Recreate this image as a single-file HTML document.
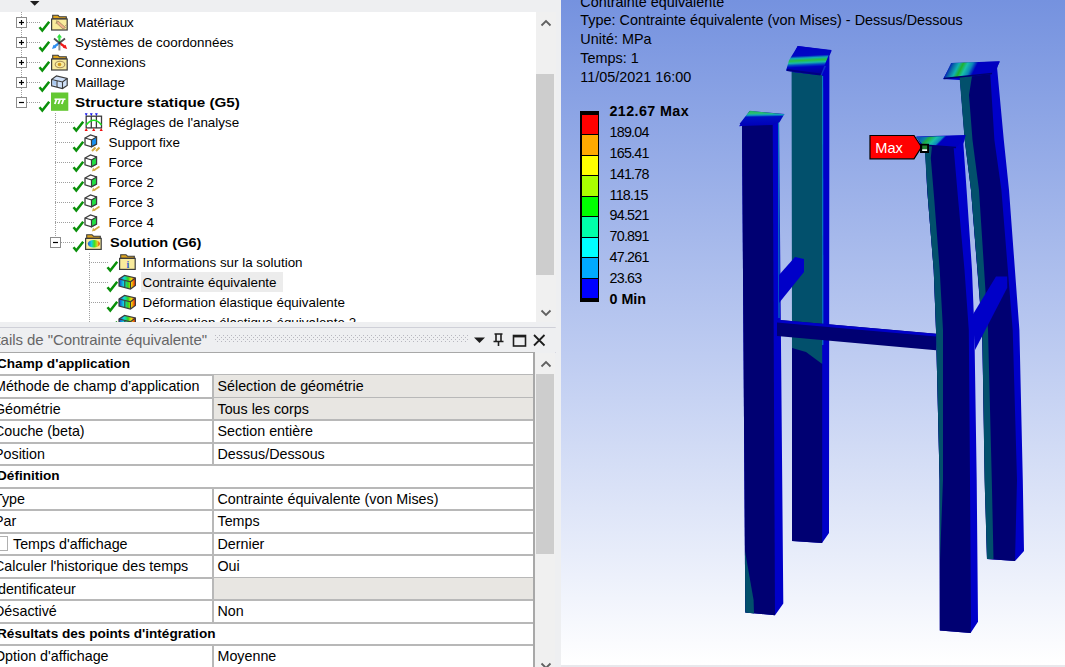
<!DOCTYPE html><html><head><meta charset="utf-8"><style>
*{margin:0;padding:0;box-sizing:border-box}
html,body{width:1065px;height:667px;overflow:hidden;background:#eeeff1;font-family:"Liberation Sans",sans-serif;color:#000}
.abs{position:absolute}
.tr{position:absolute;height:20px;line-height:20px;font-size:13.4px;white-space:nowrap;color:#000}
.b{font-weight:bold}
.dr{position:absolute;left:0;width:536px;font-size:14.3px;white-space:nowrap}
.vt{position:absolute;font-size:14.4px;white-space:nowrap;color:#000}
svg{position:absolute;overflow:visible}
</style></head><body>
<div class="abs" style="left:0;top:0;width:561px;height:12px;background:#eeeff1"></div>
<svg style="left:0;top:0" width="60" height="12"><path d="M30 1 L39.5 1 L34.7 5.8 Z" fill="#1e1e1e"/></svg>
<div class="abs" style="left:0;top:12px;width:536px;height:310px;background:#fff;overflow:hidden">
<div class="abs" style="left:21px;top:0px;width:1px;height:85px;background:repeating-linear-gradient(#a0a0a0 0 1px,transparent 1px 2px)"></div>
<div class="abs" style="left:55px;top:101px;width:1px;height:130px;background:repeating-linear-gradient(#a0a0a0 0 1px,transparent 1px 2px)"></div>
<div class="abs" style="left:89px;top:241px;width:1px;height:69px;background:repeating-linear-gradient(#a0a0a0 0 1px,transparent 1px 2px)"></div>
<svg style="left:16px;top:5px" width="11" height="11"><rect x="0.5" y="0.5" width="10" height="10" fill="#fff" stroke="#8c8c8c"/><path d="M3 5.5h5" stroke="#000" stroke-width="1.2"/><path d="M5.5 3v5" stroke="#000" stroke-width="1.2"/></svg>
<div class="abs" style="left:27px;top:10px;width:13px;height:1px;background:repeating-linear-gradient(90deg,#a0a0a0 0 1px,transparent 1px 2px)"></div>
<svg style="left:39px;top:9.399999999999999px" width="12" height="12"><path d="M0.5 6.2 L3.3 9.6 L10.2 0.8" fill="none" stroke="#0a900a" stroke-width="2.5"/></svg>
<svg style="left:50px;top:0px" width="20" height="20"><g transform="translate(0,0)"><path d="M2.7 6.8 V3.3 H8 L9.5 4.8 H16.3 V6.8Z" fill="#dca21c" stroke="#3c3c3c" stroke-width="1.1"/><rect x="1.6" y="7" width="15.6" height="11" fill="#f9eb9c" stroke="#3c3c3c" stroke-width="1.2"/><path d="M8 9 L15.5 15.5 L13 17 L6.5 11Z" fill="#f0b088" stroke="#a08860" stroke-width="0.8"/><path d="M7 8 L6 12 M15 14 L17 12.5" stroke="#a08860" stroke-width="0.8"/></g></svg>
<div class="tr" style="left:75px;top:1px;">Matériaux</div>
<svg style="left:16px;top:25px" width="11" height="11"><rect x="0.5" y="0.5" width="10" height="10" fill="#fff" stroke="#8c8c8c"/><path d="M3 5.5h5" stroke="#000" stroke-width="1.2"/><path d="M5.5 3v5" stroke="#000" stroke-width="1.2"/></svg>
<div class="abs" style="left:27px;top:30px;width:13px;height:1px;background:repeating-linear-gradient(90deg,#a0a0a0 0 1px,transparent 1px 2px)"></div>
<svg style="left:39px;top:29.4px" width="12" height="12"><path d="M0.5 6.2 L3.3 9.6 L10.2 0.8" fill="none" stroke="#0a900a" stroke-width="2.5"/></svg>
<svg style="left:50px;top:20px" width="20" height="20"><path d="M9.4 11 L9.4 4.5" stroke="#30e040" stroke-width="2.2"/><path d="M6.8 5.5 L9.4 2 L12 5.5Z" fill="#30e040"/><path d="M9.4 11 L4 6.5 M9.4 11 L15 6.5" stroke="#505050" stroke-width="1.8"/><path d="M9.4 11 L4.5 14.5" stroke="#3090f0" stroke-width="2.2"/><path d="M2 17 L3.5 12.8 L6.3 15.8Z" fill="#3090f0"/><path d="M9.4 11 L14.5 14.5" stroke="#f01818" stroke-width="2.2"/><path d="M17.2 17 L12.8 15.8 L15.5 12.8Z" fill="#f01818"/><path d="M9.4 11 V18.5" stroke="#8c8c8c" stroke-width="2"/><circle cx="9.4" cy="11" r="1.3" fill="#303030"/></svg>
<div class="tr" style="left:75px;top:21px;">Systèmes de coordonnées</div>
<svg style="left:16px;top:45px" width="11" height="11"><rect x="0.5" y="0.5" width="10" height="10" fill="#fff" stroke="#8c8c8c"/><path d="M3 5.5h5" stroke="#000" stroke-width="1.2"/><path d="M5.5 3v5" stroke="#000" stroke-width="1.2"/></svg>
<div class="abs" style="left:27px;top:50px;width:13px;height:1px;background:repeating-linear-gradient(90deg,#a0a0a0 0 1px,transparent 1px 2px)"></div>
<svg style="left:39px;top:49.4px" width="12" height="12"><path d="M0.5 6.2 L3.3 9.6 L10.2 0.8" fill="none" stroke="#0a900a" stroke-width="2.5"/></svg>
<svg style="left:50px;top:40px" width="20" height="20"><g transform="translate(0,0)"><path d="M2.7 6.8 V3.3 H8 L9.5 4.8 H16.3 V6.8Z" fill="#dca21c" stroke="#3c3c3c" stroke-width="1.1"/><rect x="1.6" y="7" width="15.6" height="11" fill="#f9eb9c" stroke="#3c3c3c" stroke-width="1.2"/><ellipse cx="10" cy="12.5" rx="4.8" ry="3.3" fill="none" stroke="#a89060" stroke-width="1.1"/><circle cx="9.5" cy="12.5" r="1.8" fill="#d09a20"/></g></svg>
<div class="tr" style="left:75px;top:41px;">Connexions</div>
<svg style="left:16px;top:65px" width="11" height="11"><rect x="0.5" y="0.5" width="10" height="10" fill="#fff" stroke="#8c8c8c"/><path d="M3 5.5h5" stroke="#000" stroke-width="1.2"/><path d="M5.5 3v5" stroke="#000" stroke-width="1.2"/></svg>
<div class="abs" style="left:27px;top:70px;width:13px;height:1px;background:repeating-linear-gradient(90deg,#a0a0a0 0 1px,transparent 1px 2px)"></div>
<svg style="left:39px;top:69.4px" width="12" height="12"><path d="M0.5 6.2 L3.3 9.6 L10.2 0.8" fill="none" stroke="#0a900a" stroke-width="2.5"/></svg>
<svg style="left:50px;top:60px" width="20" height="20"><path d="M1.6 7.5 L6.5 3.8 L17.2 6.5 V13.5 L12.5 16.5 L1.6 13.8Z" fill="#cfe0f8" stroke="#3c3c3c" stroke-width="1.2"/><path d="M1.6 7.5 L12.5 10 L17.2 6.5 M12.5 10 V16.5 M7 8.8 V15" fill="none" stroke="#3c3c3c" stroke-width="1.1"/><path d="M2.8 8.5 L6 9.2 V13 L2.8 12.5Z" fill="#a8c8f0"/></svg>
<div class="tr" style="left:75px;top:61px;">Maillage</div>
<svg style="left:16px;top:85px" width="11" height="11"><rect x="0.5" y="0.5" width="10" height="10" fill="#fff" stroke="#8c8c8c"/><path d="M3 5.5h5" stroke="#000" stroke-width="1.2"/></svg>
<div class="abs" style="left:27px;top:90px;width:13px;height:1px;background:repeating-linear-gradient(90deg,#a0a0a0 0 1px,transparent 1px 2px)"></div>
<svg style="left:39px;top:89.4px" width="12" height="12"><path d="M0.5 6.2 L3.3 9.6 L10.2 0.8" fill="none" stroke="#0a900a" stroke-width="2.5"/></svg>
<svg style="left:50px;top:80px" width="20" height="20"><rect x="1" y="0.5" width="17.3" height="18.3" fill="#64c832"/><path d="M4.5 7.2 H15.5" stroke="#fff" stroke-width="1.5"/><path d="M6.5 7.5 L4.8 12 M10 7.5 L8.3 12 M13.5 7.5 L11.8 12" stroke="#fff" stroke-width="1.8"/></svg>
<div class="tr b" style="left:75px;top:81px;transform:scaleX(1.1364);transform-origin:0 0;">Structure statique (G5)</div>
<div class="abs" style="left:55px;top:110px;width:19px;height:1px;background:repeating-linear-gradient(90deg,#a0a0a0 0 1px,transparent 1px 2px)"></div>
<svg style="left:73px;top:109.4px" width="12" height="12"><path d="M0.5 6.2 L3.3 9.6 L10.2 0.8" fill="none" stroke="#0a900a" stroke-width="2.5"/></svg>
<svg style="left:84px;top:100px" width="20" height="20"><path d="M0.8 1.2 H3.6 L2.2 4.2Z M5.9 1.2 H8.7 L7.3 4.2Z M11 1.2 H13.8 L12.4 4.2Z" fill="#1818f0"/><rect x="2.2" y="4.2" width="15.3" height="11.7" fill="#fff" stroke="#3c3c3c" stroke-width="1.3"/><path d="M7.3 4.2 V15.9 M12.4 4.2 V15.9" stroke="#3c3c3c" stroke-width="1.3"/><path d="M2.2 13 Q9.8 3.5 17.5 13" fill="none" stroke="#20e020" stroke-width="1.6"/><path d="M0.6 18.9 L2.2 15.9 L3.8 18.9Z M8.1 18.9 L9.7 15.9 L11.3 18.9Z M15.6 18.9 L17.2 15.9 L18.8 18.9Z" fill="#f01010"/></svg>
<div class="tr" style="left:108.5px;top:101px;">Réglages de l'analyse</div>
<div class="abs" style="left:55px;top:130px;width:19px;height:1px;background:repeating-linear-gradient(90deg,#a0a0a0 0 1px,transparent 1px 2px)"></div>
<svg style="left:73px;top:129.4px" width="12" height="12"><path d="M0.5 6.2 L3.3 9.6 L10.2 0.8" fill="none" stroke="#0a900a" stroke-width="2.5"/></svg>
<svg style="left:84px;top:120px" width="20" height="20"><path d="M1 6 L6.5 3 L12.5 5 V12 L7.5 14.8 L1 12.8Z" fill="#fff" stroke="#3c3c3c" stroke-width="1.3"/><path d="M7.5 8 L12.5 5 V12 L7.5 14.8Z" fill="#1890f0" stroke="#3c3c3c" stroke-width="1.1"/><path d="M1 6 L7.5 8 V14.8" fill="none" stroke="#3c3c3c" stroke-width="1.1"/><path d="M8 19 L11.5 15.5 M12 19 L15.5 15.5" stroke="#d4aa40" stroke-width="2"/></svg>
<div class="tr" style="left:108.5px;top:121px;">Support fixe</div>
<div class="abs" style="left:55px;top:150px;width:19px;height:1px;background:repeating-linear-gradient(90deg,#a0a0a0 0 1px,transparent 1px 2px)"></div>
<svg style="left:73px;top:149.4px" width="12" height="12"><path d="M0.5 6.2 L3.3 9.6 L10.2 0.8" fill="none" stroke="#0a900a" stroke-width="2.5"/></svg>
<svg style="left:84px;top:140px" width="20" height="20"><path d="M1 6 L6.5 3 L12.5 5 V12 L7.5 14.8 L1 12.8Z" fill="#fff" stroke="#3c3c3c" stroke-width="1.3"/><path d="M7.5 8 L12.5 5 V12 L7.5 14.8Z" fill="#20e040" stroke="#3c3c3c" stroke-width="1.1"/><path d="M1 6 L7.5 8 V14.8" fill="none" stroke="#3c3c3c" stroke-width="1.1"/><path d="M9.5 18.5 L15.5 14.5" stroke="#d4aa40" stroke-width="1.6"/><path d="M8 19.5 L9 15.8 L11.5 18.3Z" fill="#d4aa40"/></svg>
<div class="tr" style="left:108.5px;top:141px;">Force</div>
<div class="abs" style="left:55px;top:170px;width:19px;height:1px;background:repeating-linear-gradient(90deg,#a0a0a0 0 1px,transparent 1px 2px)"></div>
<svg style="left:73px;top:169.4px" width="12" height="12"><path d="M0.5 6.2 L3.3 9.6 L10.2 0.8" fill="none" stroke="#0a900a" stroke-width="2.5"/></svg>
<svg style="left:84px;top:160px" width="20" height="20"><path d="M1 6 L6.5 3 L12.5 5 V12 L7.5 14.8 L1 12.8Z" fill="#fff" stroke="#3c3c3c" stroke-width="1.3"/><path d="M7.5 8 L12.5 5 V12 L7.5 14.8Z" fill="#20e040" stroke="#3c3c3c" stroke-width="1.1"/><path d="M1 6 L7.5 8 V14.8" fill="none" stroke="#3c3c3c" stroke-width="1.1"/><path d="M9.5 18.5 L15.5 14.5" stroke="#d4aa40" stroke-width="1.6"/><path d="M8 19.5 L9 15.8 L11.5 18.3Z" fill="#d4aa40"/></svg>
<div class="tr" style="left:108.5px;top:161px;">Force 2</div>
<div class="abs" style="left:55px;top:190px;width:19px;height:1px;background:repeating-linear-gradient(90deg,#a0a0a0 0 1px,transparent 1px 2px)"></div>
<svg style="left:73px;top:189.4px" width="12" height="12"><path d="M0.5 6.2 L3.3 9.6 L10.2 0.8" fill="none" stroke="#0a900a" stroke-width="2.5"/></svg>
<svg style="left:84px;top:180px" width="20" height="20"><path d="M1 6 L6.5 3 L12.5 5 V12 L7.5 14.8 L1 12.8Z" fill="#fff" stroke="#3c3c3c" stroke-width="1.3"/><path d="M7.5 8 L12.5 5 V12 L7.5 14.8Z" fill="#20e040" stroke="#3c3c3c" stroke-width="1.1"/><path d="M1 6 L7.5 8 V14.8" fill="none" stroke="#3c3c3c" stroke-width="1.1"/><path d="M9.5 18.5 L15.5 14.5" stroke="#d4aa40" stroke-width="1.6"/><path d="M8 19.5 L9 15.8 L11.5 18.3Z" fill="#d4aa40"/></svg>
<div class="tr" style="left:108.5px;top:181px;">Force 3</div>
<div class="abs" style="left:55px;top:210px;width:19px;height:1px;background:repeating-linear-gradient(90deg,#a0a0a0 0 1px,transparent 1px 2px)"></div>
<svg style="left:73px;top:209.4px" width="12" height="12"><path d="M0.5 6.2 L3.3 9.6 L10.2 0.8" fill="none" stroke="#0a900a" stroke-width="2.5"/></svg>
<svg style="left:84px;top:200px" width="20" height="20"><path d="M1 6 L6.5 3 L12.5 5 V12 L7.5 14.8 L1 12.8Z" fill="#fff" stroke="#3c3c3c" stroke-width="1.3"/><path d="M7.5 8 L12.5 5 V12 L7.5 14.8Z" fill="#20e040" stroke="#3c3c3c" stroke-width="1.1"/><path d="M1 6 L7.5 8 V14.8" fill="none" stroke="#3c3c3c" stroke-width="1.1"/><path d="M9.5 18.5 L15.5 14.5" stroke="#d4aa40" stroke-width="1.6"/><path d="M8 19.5 L9 15.8 L11.5 18.3Z" fill="#d4aa40"/></svg>
<div class="tr" style="left:108.5px;top:201px;">Force 4</div>
<svg style="left:50px;top:225px" width="11" height="11"><rect x="0.5" y="0.5" width="10" height="10" fill="#fff" stroke="#8c8c8c"/><path d="M3 5.5h5" stroke="#000" stroke-width="1.2"/></svg>
<div class="abs" style="left:61px;top:230px;width:13px;height:1px;background:repeating-linear-gradient(90deg,#a0a0a0 0 1px,transparent 1px 2px)"></div>
<svg style="left:73px;top:229.4px" width="12" height="12"><path d="M0.5 6.2 L3.3 9.6 L10.2 0.8" fill="none" stroke="#0a900a" stroke-width="2.5"/></svg>
<svg style="left:84px;top:220px" width="20" height="20"><g transform="translate(0,-0.6)"><path d="M2.7 6.8 V3.3 H8 L9.5 4.8 H16.3 V6.8Z" fill="#dca21c" stroke="#3c3c3c" stroke-width="1.1"/><rect x="1.6" y="7" width="15.6" height="11" fill="#f9eb9c" stroke="#3c3c3c" stroke-width="1.2"/><defs><linearGradient id="rb" x1="0" x2="1"><stop offset="0" stop-color="#2050d0"/><stop offset="0.3" stop-color="#10d0e0"/><stop offset="0.55" stop-color="#40e020"/><stop offset="0.8" stop-color="#e0d020"/><stop offset="1" stop-color="#f02010"/></linearGradient></defs><ellipse cx="9.8" cy="12.3" rx="6" ry="3.8" fill="url(#rb)"/></g></svg>
<div class="tr b" style="left:109.5px;top:221px;transform:scaleX(1.0879);transform-origin:0 0;">Solution (G6)</div>
<div class="abs" style="left:89px;top:250px;width:19px;height:1px;background:repeating-linear-gradient(90deg,#a0a0a0 0 1px,transparent 1px 2px)"></div>
<svg style="left:107px;top:249.39999999999998px" width="12" height="12"><path d="M0.5 6.2 L3.3 9.6 L10.2 0.8" fill="none" stroke="#0a900a" stroke-width="2.5"/></svg>
<svg style="left:118px;top:240px" width="20" height="20"><g transform="translate(0,-0.6)"><path d="M2.7 6.8 V3.3 H8 L9.5 4.8 H16.3 V6.8Z" fill="#dca21c" stroke="#3c3c3c" stroke-width="1.1"/><rect x="1.6" y="7" width="15.6" height="11" fill="#f9eb9c" stroke="#3c3c3c" stroke-width="1.2"/><text x="9.8" y="17" font-size="10" fill="#3060d0" text-anchor="middle" font-family="Liberation Serif" font-weight="bold">i</text></g></svg>
<div class="tr" style="left:142.5px;top:241px;">Informations sur la solution</div>
<div class="abs" style="left:89px;top:270px;width:19px;height:1px;background:repeating-linear-gradient(90deg,#a0a0a0 0 1px,transparent 1px 2px)"></div>
<svg style="left:107px;top:269.4px" width="12" height="12"><path d="M0.5 6.2 L3.3 9.6 L10.2 0.8" fill="none" stroke="#0a900a" stroke-width="2.5"/></svg>
<svg style="left:118px;top:260px" width="20" height="20"><defs><linearGradient id="rg" x1="0" x2="1"><stop offset="0" stop-color="#1838d0"/><stop offset="0.3" stop-color="#10e0e0"/><stop offset="0.55" stop-color="#30d020"/><stop offset="0.75" stop-color="#f0e010"/><stop offset="1" stop-color="#f01808"/></linearGradient></defs><path d="M1 7 L6.5 3.5 L17.4 6 V13.5 L12.5 17 L1 14Z" fill="url(#rg)" stroke="#3c3c3c" stroke-width="1.2"/><path d="M1 7 L12.5 9.8 L17.4 6 M12.5 9.8 V17 M6.8 8.4 V15.5" fill="none" stroke="#3c3c3c" stroke-width="1.1"/></svg>
<div class="abs" style="left:141px;top:260px;width:142px;height:20px;background:#ececec"></div>
<div class="tr" style="left:142.5px;top:261px;">Contrainte équivalente</div>
<div class="abs" style="left:89px;top:290px;width:19px;height:1px;background:repeating-linear-gradient(90deg,#a0a0a0 0 1px,transparent 1px 2px)"></div>
<svg style="left:107px;top:289.4px" width="12" height="12"><path d="M0.5 6.2 L3.3 9.6 L10.2 0.8" fill="none" stroke="#0a900a" stroke-width="2.5"/></svg>
<svg style="left:118px;top:280px" width="20" height="20"><defs><linearGradient id="rg" x1="0" x2="1"><stop offset="0" stop-color="#1838d0"/><stop offset="0.3" stop-color="#10e0e0"/><stop offset="0.55" stop-color="#30d020"/><stop offset="0.75" stop-color="#f0e010"/><stop offset="1" stop-color="#f01808"/></linearGradient></defs><path d="M1 7 L6.5 3.5 L17.4 6 V13.5 L12.5 17 L1 14Z" fill="url(#rg)" stroke="#3c3c3c" stroke-width="1.2"/><path d="M1 7 L12.5 9.8 L17.4 6 M12.5 9.8 V17 M6.8 8.4 V15.5" fill="none" stroke="#3c3c3c" stroke-width="1.1"/></svg>
<div class="tr" style="left:142.5px;top:281px;">Déformation élastique équivalente</div>
<div class="abs" style="left:89px;top:310px;width:19px;height:1px;background:repeating-linear-gradient(90deg,#a0a0a0 0 1px,transparent 1px 2px)"></div>
<svg style="left:107px;top:309.4px" width="12" height="12"><path d="M0.5 6.2 L3.3 9.6 L10.2 0.8" fill="none" stroke="#0a900a" stroke-width="2.5"/></svg>
<svg style="left:118px;top:300px" width="20" height="20"><defs><linearGradient id="rg" x1="0" x2="1"><stop offset="0" stop-color="#1838d0"/><stop offset="0.3" stop-color="#10e0e0"/><stop offset="0.55" stop-color="#30d020"/><stop offset="0.75" stop-color="#f0e010"/><stop offset="1" stop-color="#f01808"/></linearGradient></defs><path d="M1 7 L6.5 3.5 L17.4 6 V13.5 L12.5 17 L1 14Z" fill="url(#rg)" stroke="#3c3c3c" stroke-width="1.2"/><path d="M1 7 L12.5 9.8 L17.4 6 M12.5 9.8 V17 M6.8 8.4 V15.5" fill="none" stroke="#3c3c3c" stroke-width="1.1"/></svg>
<div class="tr" style="left:142.5px;top:301px;">Déformation élastique équivalente 2</div>
</div>
<div class="abs" style="left:536px;top:12px;width:20px;height:310px;background:#f0f0f0"></div>
<div class="abs" style="left:536px;top:74px;width:18px;height:201px;background:#cdcdcd"></div>
<svg style="left:540px;top:19px" width="12" height="8"><path d="M1.5 6.5 L6 2 L10.5 6.5" fill="none" stroke="#606060" stroke-width="1.8"/></svg>
<svg style="left:540px;top:309px" width="12" height="8"><path d="M1.5 1.5 L6 6 L10.5 1.5" fill="none" stroke="#606060" stroke-width="1.8"/></svg>
<div class="abs" style="left:0;top:327px;width:556px;height:1px;background:#cfd0d8"></div>
<div class="abs" style="left:555px;top:327px;width:1px;height:26px;background:#d8d8e0"></div>
<div class="abs" style="left:0;top:328px;width:556px;height:24px;background:#eeeff1"></div>
<div class="abs" style="left:-3.5px;top:330.5px;font-size:15px;letter-spacing:-0.06px;color:#666;white-space:nowrap">tails de "Contrainte équivalente"</div>
<svg style="left:215px;top:335px" width="253" height="8"><defs><pattern id="dp" width="4" height="4" patternUnits="userSpaceOnUse"><rect x="0" y="0" width="1" height="1" fill="#b8b8c0"/><rect x="2" y="2" width="1" height="1" fill="#b8b8c0"/></pattern></defs><rect width="253" height="8" fill="url(#dp)"/></svg>
<svg style="left:474px;top:333px" width="80" height="14"><path d="M0 4.5 H11 L5.5 10Z" fill="#1e1e1e"/><path d="M20.5 1 H28.5 M22 1 V8.5 H27 V1 M19.5 8.5 H29.5 M24.5 8.5 V13" stroke="#1e1e1e" stroke-width="1.6" fill="none"/><rect x="39.5" y="2.5" width="12" height="10.5" fill="none" stroke="#1e1e1e" stroke-width="1.6"/><path d="M39.5 3.3 H51.5" stroke="#1e1e1e" stroke-width="2.2"/><path d="M60 2 L70.5 12.5 M70.5 2 L60 12.5" stroke="#1e1e1e" stroke-width="1.8"/></svg>
<div class="abs" style="left:0;top:352px;width:533px;height:315px;background:#fff;overflow:hidden">
<div class="dr" style="top:0.5px;height:22.5px;line-height:22.5px;left:-3px;font-weight:bold;font-size:13.6px">Champ d'application</div>
<div class="abs" style="left:0;top:22.0px;width:536px;height:2px;background:#b8b8b8"></div>
<div class="abs" style="left:214px;top:23.0px;width:323px;height:22.5px;background:#e8e6e2"></div>
<div class="abs" style="left:212px;top:23.0px;width:2px;height:22.5px;background:#b8b8b8"></div>
<div class="dr" style="top:23.0px;height:22.5px;line-height:22.5px;left:-6px">Méthode de champ d'application</div>
<div class="dr" style="top:23.0px;height:22.5px;line-height:22.5px;left:217.5px">Sélection de géométrie</div>
<div class="abs" style="left:0;top:44.5px;width:536px;height:2px;background:#b8b8b8"></div>
<div class="abs" style="left:214px;top:45.5px;width:323px;height:22.5px;background:#e8e6e2"></div>
<div class="abs" style="left:212px;top:45.5px;width:2px;height:22.5px;background:#b8b8b8"></div>
<div class="dr" style="top:45.5px;height:22.5px;line-height:22.5px;left:-6px">Géométrie</div>
<div class="dr" style="top:45.5px;height:22.5px;line-height:22.5px;left:217.5px">Tous les corps</div>
<div class="abs" style="left:0;top:67.0px;width:536px;height:2px;background:#b8b8b8"></div>
<div class="abs" style="left:212px;top:68.0px;width:2px;height:22.5px;background:#b8b8b8"></div>
<div class="dr" style="top:68.0px;height:22.5px;line-height:22.5px;left:-6px">Couche (beta)</div>
<div class="dr" style="top:68.0px;height:22.5px;line-height:22.5px;left:217.5px">Section entière</div>
<div class="abs" style="left:0;top:89.5px;width:536px;height:2px;background:#b8b8b8"></div>
<div class="abs" style="left:212px;top:90.5px;width:2px;height:22.5px;background:#b8b8b8"></div>
<div class="dr" style="top:90.5px;height:22.5px;line-height:22.5px;left:-6px">Position</div>
<div class="dr" style="top:90.5px;height:22.5px;line-height:22.5px;left:217.5px">Dessus/Dessous</div>
<div class="abs" style="left:0;top:112.0px;width:536px;height:2px;background:#b8b8b8"></div>
<div class="dr" style="top:113.0px;height:22.5px;line-height:22.5px;left:-3px;font-weight:bold;font-size:13.6px">Définition</div>
<div class="abs" style="left:0;top:134.5px;width:536px;height:2px;background:#b8b8b8"></div>
<div class="abs" style="left:212px;top:135.5px;width:2px;height:22.5px;background:#b8b8b8"></div>
<div class="dr" style="top:135.5px;height:22.5px;line-height:22.5px;left:-6px">Type</div>
<div class="dr" style="top:135.5px;height:22.5px;line-height:22.5px;left:217.5px">Contrainte équivalente (von Mises)</div>
<div class="abs" style="left:0;top:157.0px;width:536px;height:2px;background:#b8b8b8"></div>
<div class="abs" style="left:212px;top:158.0px;width:2px;height:22.5px;background:#b8b8b8"></div>
<div class="dr" style="top:158.0px;height:22.5px;line-height:22.5px;left:-6px">Par</div>
<div class="dr" style="top:158.0px;height:22.5px;line-height:22.5px;left:217.5px">Temps</div>
<div class="abs" style="left:0;top:179.5px;width:536px;height:2px;background:#b8b8b8"></div>
<div class="abs" style="left:212px;top:180.5px;width:2px;height:22.5px;background:#b8b8b8"></div>
<div class="abs" style="left:0px;top:184.2px;width:7.5px;height:14.5px;border:1px solid #b0b0b0;border-left:none;background:#fff"></div>
<div class="dr" style="top:180.5px;height:22.5px;line-height:22.5px;left:13px">Temps d'affichage</div>
<div class="dr" style="top:180.5px;height:22.5px;line-height:22.5px;left:217.5px">Dernier</div>
<div class="abs" style="left:0;top:202.0px;width:536px;height:2px;background:#b8b8b8"></div>
<div class="abs" style="left:212px;top:203.0px;width:2px;height:22.5px;background:#b8b8b8"></div>
<div class="dr" style="top:203.0px;height:22.5px;line-height:22.5px;left:-6px">Calculer l'historique des temps</div>
<div class="dr" style="top:203.0px;height:22.5px;line-height:22.5px;left:217.5px">Oui</div>
<div class="abs" style="left:0;top:224.5px;width:536px;height:2px;background:#b8b8b8"></div>
<div class="abs" style="left:214px;top:225.5px;width:323px;height:22.5px;background:#e8e6e2"></div>
<div class="abs" style="left:212px;top:225.5px;width:2px;height:22.5px;background:#b8b8b8"></div>
<div class="dr" style="top:225.5px;height:22.5px;line-height:22.5px;left:-6px">Identificateur</div>
<div class="dr" style="top:225.5px;height:22.5px;line-height:22.5px;left:217.5px"></div>
<div class="abs" style="left:0;top:247.0px;width:536px;height:2px;background:#b8b8b8"></div>
<div class="abs" style="left:212px;top:248.0px;width:2px;height:22.5px;background:#b8b8b8"></div>
<div class="dr" style="top:248.0px;height:22.5px;line-height:22.5px;left:-6px">Désactivé</div>
<div class="dr" style="top:248.0px;height:22.5px;line-height:22.5px;left:217.5px">Non</div>
<div class="abs" style="left:0;top:269.5px;width:536px;height:2px;background:#b8b8b8"></div>
<div class="dr" style="top:270.5px;height:22.5px;line-height:22.5px;left:-3px;font-weight:bold;font-size:13.6px">Résultats des points d'intégration</div>
<div class="abs" style="left:0;top:292.0px;width:536px;height:2px;background:#b8b8b8"></div>
<div class="abs" style="left:212px;top:293.0px;width:2px;height:22.5px;background:#b8b8b8"></div>
<div class="dr" style="top:293.0px;height:22.5px;line-height:22.5px;left:-6px">Option d'affichage</div>
<div class="dr" style="top:293.0px;height:22.5px;line-height:22.5px;left:217.5px">Moyenne</div>
<div class="abs" style="left:0;top:314.5px;width:536px;height:2px;background:#b8b8b8"></div>
</div>
<div class="abs" style="left:0;top:352px;width:534px;height:1px;background:#a8a8a8"></div>
<div class="abs" style="left:533px;top:352px;width:1.5px;height:315px;background:#a8a8a8"></div>
<div class="abs" style="left:535px;top:353px;width:20px;height:314px;background:#f0f0f0"></div>
<div class="abs" style="left:536px;top:374px;width:18px;height:180px;background:#cdcdcd"></div>
<svg style="left:539.5px;top:359.5px" width="12" height="8"><path d="M1.5 6.5 L6 2 L10.5 6.5" fill="none" stroke="#606060" stroke-width="1.8"/></svg>
<svg style="left:540px;top:662px" width="12" height="8"><path d="M1.5 1.5 L6 6 L10.5 1.5" fill="none" stroke="#606060" stroke-width="1.8"/></svg>
<div class="abs" style="left:561px;top:0;width:504px;height:665px;background:linear-gradient(#7592df 0%,#b9c8f0 50%,#ffffff 100%);overflow:hidden">
<div class="vt" style="left:19.3px;top:-7.4px;line-height:18px">Contrainte équivalente</div>
<div class="vt" style="left:19.3px;top:11.4px;line-height:18px">Type: Contrainte équivalente (von Mises) - Dessus/Dessous</div>
<div class="vt" style="left:19.3px;top:30.2px;line-height:18px">Unité: MPa</div>
<div class="vt" style="left:19.3px;top:48.9px;line-height:18px">Temps: 1</div>
<div class="vt" style="left:19.3px;top:67.7px;line-height:18px">11/05/2021 16:00</div>
<div class="abs" style="left:19px;top:111px;width:19px;height:191px;background:#000"></div>
<div class="abs" style="left:20.5px;top:114.8px;width:16px;height:19.288888888888895px;background:#ff0000"></div>
<div class="abs" style="left:20.5px;top:135.2888888888889px;width:16px;height:19.288888888888895px;background:#ffaa00"></div>
<div class="abs" style="left:20.5px;top:155.7777777777778px;width:16px;height:19.288888888888895px;background:#ffff00"></div>
<div class="abs" style="left:20.5px;top:176.26666666666668px;width:16px;height:19.288888888888895px;background:#aaff00"></div>
<div class="abs" style="left:20.5px;top:196.75555555555556px;width:16px;height:19.288888888888895px;background:#00ff00"></div>
<div class="abs" style="left:20.5px;top:217.24444444444447px;width:16px;height:19.288888888888895px;background:#00ffaa"></div>
<div class="abs" style="left:20.5px;top:237.73333333333338px;width:16px;height:19.288888888888895px;background:#00ffff"></div>
<div class="abs" style="left:20.5px;top:258.2222222222223px;width:16px;height:19.288888888888895px;background:#00aaff"></div>
<div class="abs" style="left:20.5px;top:278.71111111111117px;width:16px;height:19.288888888888895px;background:#0000ff"></div>
<div class="vt" style="left:48.5px;top:102.40px;line-height:18px;font-size:14.3px;font-weight:bold;letter-spacing:0.4px;">212.67 Max</div>
<div class="vt" style="left:48.5px;top:123.20px;line-height:18px;font-size:14.3px;letter-spacing:-0.75px;">189.04</div>
<div class="vt" style="left:48.5px;top:144.00px;line-height:18px;font-size:14.3px;letter-spacing:-0.75px;">165.41</div>
<div class="vt" style="left:48.5px;top:164.80px;line-height:18px;font-size:14.3px;letter-spacing:-0.75px;">141.78</div>
<div class="vt" style="left:48.5px;top:185.60px;line-height:18px;font-size:14.3px;letter-spacing:-0.75px;">118.15</div>
<div class="vt" style="left:48.5px;top:206.40px;line-height:18px;font-size:14.3px;letter-spacing:-0.75px;">94.521</div>
<div class="vt" style="left:48.5px;top:227.20px;line-height:18px;font-size:14.3px;letter-spacing:-0.75px;">70.891</div>
<div class="vt" style="left:48.5px;top:248.00px;line-height:18px;font-size:14.3px;letter-spacing:-0.75px;">47.261</div>
<div class="vt" style="left:48.5px;top:268.80px;line-height:18px;font-size:14.3px;letter-spacing:-0.75px;">23.63</div>
<div class="vt" style="left:48.5px;top:289.60px;line-height:18px;font-size:14.3px;font-weight:bold;">0 Min</div>
</div>
<div class="abs" style="left:561px;top:665px;width:504px;height:2px;background:#e8e8ec"></div>
<svg style="left:0;top:0" width="1065" height="665">
<polygon points="797.6,46 831.7,50.4 829.4,56 829,533 822,543 792,541 792,71 786,70.8" fill="#0000c8"/>
<polygon points="791.6,72 819,75 822.2,75 822.2,364 792,348" fill="#02506c"/>
<polygon points="792,348 806,352 822.2,364 822.2,543 792,541" fill="#000072"/>
<polygon points="786,70.8 791,63 826,66 822,75 819.2,75" fill="#0a30c8"/>
<polygon points="749.5,111 784.7,114 779,118 783.3,603.6 775,615.3 745.3,612.6 742,126 739,126.2" fill="#0000c8"/>
<polygon points="742,125 772.7,124 775,615.3 745.3,612.6" fill="#000072"/>
<polygon points="745,551 753.6,600 754,613.4 745.3,612.6" fill="#02506c"/>
<path d="M822.6 76 L822.8 345" stroke="#0a88c0" stroke-width="1.1"/>
<path d="M778.6 122 L779 318" stroke="#0a88c0" stroke-width="1"/>
<polygon points="779,275 795,257 804,259 804,272 779,303" fill="#0000c8"/>
<polygon points="777,319.8 936,333.7 936,350.2 777,336" fill="#000072"/>
<polygon points="777,319.8 936,333.7 936,336.5 777,322.6" fill="#0000c8"/>
<polygon points="952,63 1000,61.5 997,67 1003.8,140 1009,190 1019.4,330 1022.8,480 1024,551 1015,561 987,559 985,480 982,330 971,190 965,140 960,80 943,79" fill="#0000c8"/>
<polygon points="960,78 990.3,74 994.4,140 1001.4,190 1012.7,330 1017,480 1015,561 987,559 984.6,480 982.3,330 971,190 964.7,140" fill="#000072"/>
<polygon points="959.5,77 972,76 969,95 972.5,140 979,190 988,330 991.8,480 993.5,559 987,559 984.6,480 982.3,330 971,190 964.7,140" fill="#02506c"/>
<polygon points="972.7,314.7 996,276.5 1007.2,276.5 1007.2,287.7 975,350" fill="#0000c8"/>
<polygon points="916.2,136.6 965.7,135 963.4,144 966.6,190 972,270 974.4,330 976.7,480 978,621.7 970.6,633 939.8,630.6 939.6,480 936,330 933.7,270 927.2,190 925,144 920.7,144.4" fill="#0000c8"/>
<polygon points="925,144 953.5,146 958.2,200 964.5,270 968.8,330 970,480 971,620 970.6,633 939.8,630.6 939.6,480 936,330 933.7,270 927.2,190" fill="#000072"/>
<polygon points="924.5,146 932,146 930.8,158 934.3,200 939.7,270 943,330 943,480 940,560 939.6,480 936,330 933.7,270 928,200" fill="#02506c"/>
<defs><linearGradient id="capB" x1="0" y1="0" x2="0.08" y2="1"><stop offset="0" stop-color="#0000c4"/><stop offset="0.36" stop-color="#0008c4"/><stop offset="0.44" stop-color="#10a8b8"/><stop offset="0.52" stop-color="#28c040"/><stop offset="0.6" stop-color="#18b8a8"/><stop offset="0.68" stop-color="#0040c8"/><stop offset="0.75" stop-color="#0000c0"/><stop offset="1" stop-color="#000098"/></linearGradient><linearGradient id="capA" x1="0" y1="0" x2="0.05" y2="1"><stop offset="0" stop-color="#20b060"/><stop offset="0.18" stop-color="#28c070"/><stop offset="0.3" stop-color="#10a0c0"/><stop offset="0.42" stop-color="#0010c4"/><stop offset="1" stop-color="#0000b8"/></linearGradient><linearGradient id="capD" gradientUnits="userSpaceOnUse" x1="946" y1="70" x2="972.8" y2="83.4"><stop offset="0" stop-color="#0008c0"/><stop offset="0.15" stop-color="#0a68a8"/><stop offset="0.3" stop-color="#10b0b0"/><stop offset="0.42" stop-color="#20b030"/><stop offset="0.55" stop-color="#18c0a8"/><stop offset="0.7" stop-color="#0a88b8"/><stop offset="0.85" stop-color="#0000c0"/><stop offset="1" stop-color="#0000c0"/></linearGradient><linearGradient id="capC" gradientUnits="userSpaceOnUse" x1="918" y1="140" x2="939.2" y2="161.2"><stop offset="0" stop-color="#0860b0"/><stop offset="0.12" stop-color="#0a80a8"/><stop offset="0.22" stop-color="#20b040"/><stop offset="0.38" stop-color="#18c0a8"/><stop offset="0.52" stop-color="#0a88c0"/><stop offset="0.58" stop-color="#0000c0"/><stop offset="1" stop-color="#0000c0"/></linearGradient></defs>
<polygon points="797.8,46.1 831.5,50.1 828.8,54.8 820.7,75.1 786.3,69.7 789,60.2" fill="url(#capB)"/>
<polygon points="749.8,110.8 784.3,114.2 779.5,122.3 772.7,125 742,126 739.7,123.7" fill="url(#capA)"/>
<polygon points="951.1,62.9 999.5,61.2 997.2,68.1 991.9,74.1 951.8,77.4 943.3,79.3" fill="url(#capD)"/>
<polygon points="915.8,136.9 965.4,135.4 961.6,141.8 956,148 922.5,144.5" fill="url(#capC)"/>
<path d="M944 78.5 L992 73.5" stroke="#000070" stroke-width="1.5"/>
<path d="M923 145 L956 147.5" stroke="#000070" stroke-width="1.5"/>
<path d="M787 70 L820.5 74.5" stroke="#000080" stroke-width="2"/>
<polygon points="870,135.5 914,135.5 921.5,147 914,158.8 870,158.8" fill="#ff0000" stroke="#000" stroke-width="1.2"/>
<text x="875.3" y="153.3" font-family="Liberation Sans" font-size="14.6" fill="#fff">Max</text>
<rect x="920" y="143.8" width="9" height="9.2" fill="#000"/><rect x="922.2" y="145.5" width="4.9" height="5.5" fill="#208030"/><rect x="922.2" y="149.3" width="4.9" height="1.7" fill="#fff"/>
</svg>
</body></html>
